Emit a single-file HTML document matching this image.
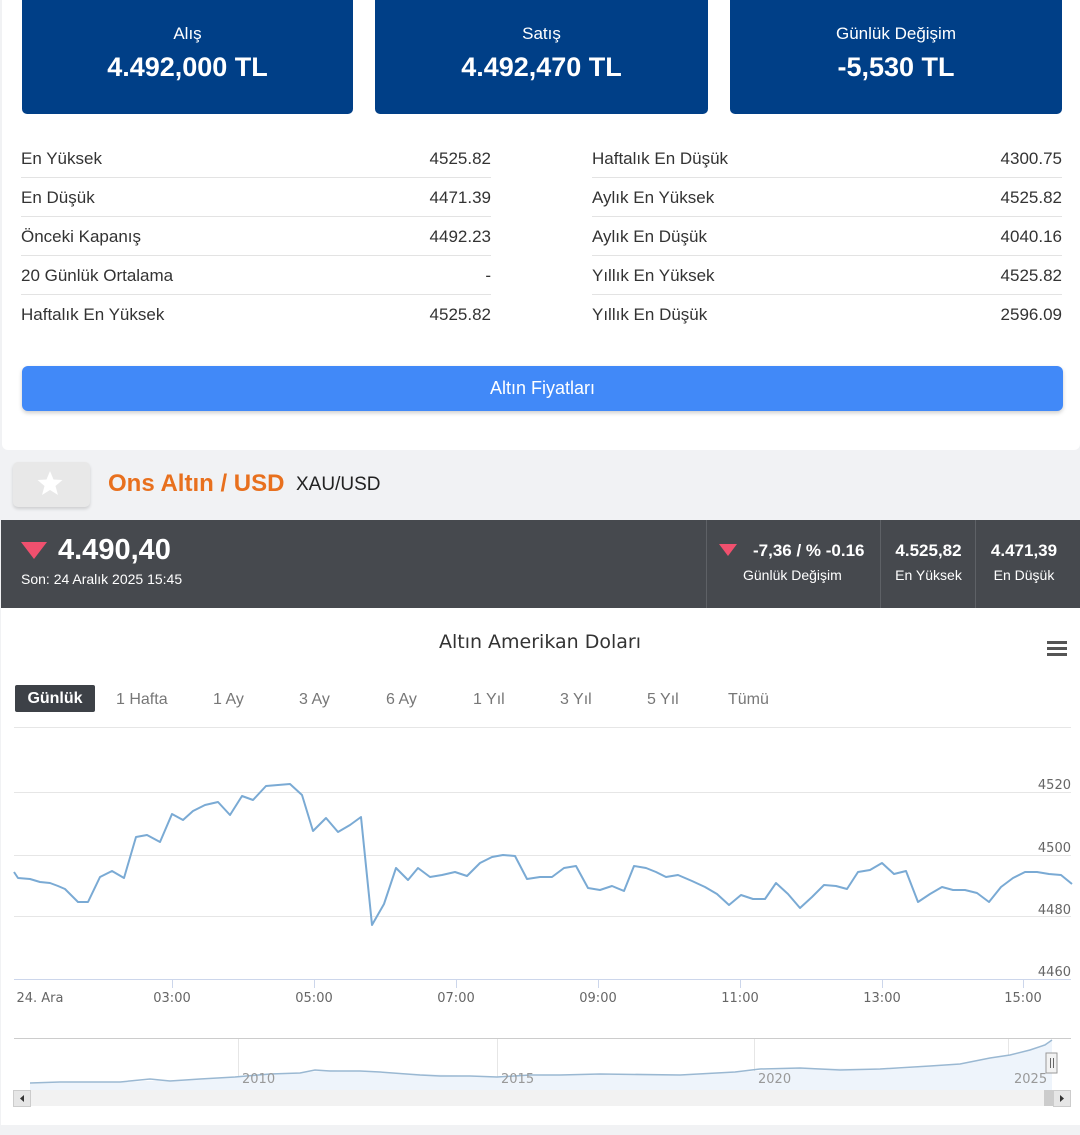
<!DOCTYPE html>
<html><head><meta charset="utf-8">
<style>
*{margin:0;padding:0;box-sizing:border-box}
body{width:1080px;height:1135px;background:#f1f2f4;font-family:"Liberation Sans",sans-serif;position:relative;overflow:hidden;color:#333}
.abs{position:absolute}
.panel{left:2px;top:0;width:1078px;height:450px;background:#fff;border-radius:0 0 6px 6px}
.card{top:0;height:114px;background:#003f87;border-radius:0 0 5px 5px;color:#fff;text-align:center}
.card .l{position:absolute;top:24px;width:100%;font-size:17px}
.card .v{position:absolute;top:52px;width:100%;font-size:27px;font-weight:bold}
.row{height:39px;border-bottom:1px solid #e3e3e3;font-size:17px;line-height:39px;display:flex;justify-content:space-between;color:#333}
.btn{left:22px;top:366px;width:1041px;height:45px;background:#4189f8;border-radius:6px;color:#fff;text-align:center;line-height:45px;font-size:18px;box-shadow:0 2px 4px rgba(0,0,0,.2)}
.dark{left:1px;top:520px;width:1079px;height:88px;background:#46494e;color:#fff}
.tri{width:0;height:0;border-left:13px solid transparent;border-right:13px solid transparent;border-top:17px solid #f0506e}
.sep{top:0;width:1px;height:88px;background:#5e6166}
.chart{left:1px;top:608px;width:1079px;height:517px;background:#fff}
.rb{top:686px;font-size:16px;color:#777;line-height:27px}
</style></head><body>
<div class="abs panel"></div>
<div class="abs card" style="left:22px;width:331px"><div class="l">Alış</div><div class="v">4.492,000 TL</div></div>
<div class="abs card" style="left:375px;width:333px"><div class="l">Satış</div><div class="v">4.492,470 TL</div></div>
<div class="abs card" style="left:730px;width:332px"><div class="l">Günlük Değişim</div><div class="v">-5,530 TL</div></div>

<div class="abs" style="left:21px;top:139px;width:470px">
<div class="row"><span>En Yüksek</span><span>4525.82</span></div>
<div class="row"><span>En Düşük</span><span>4471.39</span></div>
<div class="row"><span>Önceki Kapanış</span><span>4492.23</span></div>
<div class="row"><span>20 Günlük Ortalama</span><span>-</span></div>
<div class="row" style="border:none"><span>Haftalık En Yüksek</span><span>4525.82</span></div>
</div>
<div class="abs" style="left:592px;top:139px;width:470px">
<div class="row"><span>Haftalık En Düşük</span><span>4300.75</span></div>
<div class="row"><span>Aylık En Yüksek</span><span>4525.82</span></div>
<div class="row"><span>Aylık En Düşük</span><span>4040.16</span></div>
<div class="row"><span>Yıllık En Yüksek</span><span>4525.82</span></div>
<div class="row" style="border:none"><span>Yıllık En Düşük</span><span>2596.09</span></div>
</div>
<div class="abs btn">Altın Fiyatları</div>

<div class="abs" style="left:13px;top:462px;width:77px;height:45px;background:#e8e8e8;border-radius:5px;box-shadow:0 2px 3px rgba(0,0,0,.15)">
<svg width="77" height="45" viewBox="0 0 77 45"><polygon fill="#fff" points="37,9 40.5,17.5 49.5,18 42.5,24 45,33 37,28 29,33 31.5,24 24.5,18 33.5,17.5"/></svg></div>
<div class="abs" style="left:108px;top:470px;font-size:24px;font-weight:bold;color:#e8701e">Ons Altın / USD</div>
<div class="abs" style="left:296px;top:474px;font-size:19px;color:#222">XAU/USD</div>

<div class="abs dark">
<div class="abs tri" style="left:20px;top:22px"></div>
<div class="abs" style="left:57px;top:14px;font-size:29px;font-weight:bold">4.490,40</div>
<div class="abs" style="left:20px;top:51px;font-size:14px">Son: 24 Aralık 2025 15:45</div>
<div class="abs sep" style="left:705px"></div>
<div class="abs sep" style="left:879px"></div>
<div class="abs sep" style="left:974px"></div>
<div class="abs tri" style="left:718px;top:24px;border-left-width:9px;border-right-width:9px;border-top-width:12px"></div>
<div class="abs" style="left:752px;top:21px;font-size:17px;font-weight:bold">-7,36 / % -0.16</div>
<div class="abs" style="left:742px;top:47px;font-size:14px">Günlük Değişim</div>
<div class="abs" style="left:880px;width:95px;text-align:center;top:21px;font-size:17px;font-weight:bold">4.525,82</div>
<div class="abs" style="left:880px;width:95px;text-align:center;top:47px;font-size:14px">En Yüksek</div>
<div class="abs" style="left:975px;width:96px;text-align:center;top:21px;font-size:17px;font-weight:bold">4.471,39</div>
<div class="abs" style="left:975px;width:96px;text-align:center;top:47px;font-size:14px">En Düşük</div>
</div>

<div class="abs chart"></div>
<div class="abs" style="left:0;width:1080px;top:631px;text-align:center;color:#333;font-family:'DejaVu Sans',sans-serif;font-size:19px">Altın Amerikan Doları</div>
<div class="abs" style="left:1047px;top:641px;width:20px;height:3px;background:#555;box-shadow:0 6px 0 #555,0 12px 0 #555"></div>
<div class="abs rb" style="left:15px;width:80px;height:27px;background:#3d4147;color:#fff;font-weight:bold;text-align:center;border-radius:2px;top:685px">Günlük</div>
<div class="abs rb" style="left:116px">1 Hafta</div>
<div class="abs rb" style="left:213px">1 Ay</div>
<div class="abs rb" style="left:299px">3 Ay</div>
<div class="abs rb" style="left:386px">6 Ay</div>
<div class="abs rb" style="left:473px">1 Yıl</div>
<div class="abs rb" style="left:560px">3 Yıl</div>
<div class="abs rb" style="left:647px">5 Yıl</div>
<div class="abs rb" style="left:728px">Tümü</div>

<svg class="abs" style="left:0;top:0" width="1080" height="1135" font-family="DejaVu Sans, sans-serif">
<g stroke="#e6e6e6" stroke-width="1">
<line x1="14" y1="727.5" x2="1071" y2="727.5"/>
<line x1="14" y1="792.5" x2="1071" y2="792.5"/>
<line x1="14" y1="855.5" x2="1071" y2="855.5"/>
<line x1="14" y1="916.5" x2="1071" y2="916.5"/>
</g>
<line x1="14" y1="979.5" x2="1071" y2="979.5" stroke="#ccd6eb"/>
<g stroke="#ccd6eb"><line x1="172.5" y1="979" x2="172.5" y2="988"/><line x1="314.5" y1="979" x2="314.5" y2="988"/><line x1="456.5" y1="979" x2="456.5" y2="988"/><line x1="598.5" y1="979" x2="598.5" y2="988"/><line x1="740.5" y1="979" x2="740.5" y2="988"/><line x1="882.5" y1="979" x2="882.5" y2="988"/><line x1="1023.5" y1="979" x2="1023.5" y2="988"/></g>
<g font-size="13" fill="#666" text-anchor="end">
<text x="1071" y="789">4520</text><text x="1071" y="852">4500</text><text x="1071" y="914">4480</text><text x="1071" y="976">4460</text>
</g>
<g font-size="13" fill="#666" text-anchor="middle">
<text x="40" y="1002">24. Ara</text><text x="172" y="1002">03:00</text><text x="314" y="1002">05:00</text><text x="456" y="1002">07:00</text><text x="598" y="1002">09:00</text><text x="740" y="1002">11:00</text><text x="882" y="1002">13:00</text><text x="1023" y="1002">15:00</text>
</g>
<polyline fill="none" stroke="#7aaad4" stroke-width="2" stroke-linejoin="round" points="14,872 18,878 30,879 40,882 50,883 58,886 65,889 78,902 88,902 100,877 112,871 124,878 136,837 147,835 160,842 172,814 183,820 193,811 205,805 218,802 230,815 242,796 253,800 266,786 278,785 290,784 302,795 313,831 326,818 338,832 350,825 361,817 372,925 384,904 396,868 408,880 418,868 430,877 442,875 455,872 467,876 480,863 492,857 503,855 515,856 527,879 540,877 552,877 564,868 576,866 588,888 600,890 612,886 624,891 634,866 646,868 656,872 666,877 678,875 692,881 705,887 717,894 729,905 741,895 753,899 765,899 776,883 788,894 800,908 812,897 824,885 836,886 847,889 858,872 870,870 882,863 894,874 906,871 918,902 930,894 942,887 953,890 965,890 977,893 989,902 1001,887 1013,878 1025,872 1037,872 1049,874 1061,875 1072,884"/>
<line x1="14" y1="1038.5" x2="1071" y2="1038.5" stroke="#ccc"/>
<g stroke="#e6e6e6"><line x1="238.5" y1="1039" x2="238.5" y2="1090"/><line x1="497.5" y1="1039" x2="497.5" y2="1090"/><line x1="754.5" y1="1039" x2="754.5" y2="1090"/><line x1="1008.5" y1="1039" x2="1008.5" y2="1090"/></g>
<polygon fill="#eef4fb" points="30,1083 120,1082 200,1079 300,1073 330,1070 400,1073 500,1077 560,1075 680,1075 740,1072 800,1068 900,1069 960,1064 1010,1055 1040,1046 1052,1040 1052,1090 30,1090"/>
<polyline fill="none" stroke="#9ab8d2" stroke-width="1.5" points="30,1083 60,1082 120,1082 150,1079 170,1081 200,1079 235,1077 270,1074 300,1073 315,1070 330,1071 360,1071 380,1072 420,1075 440,1076 470,1076 497,1077 530,1075 560,1075 600,1074 680,1075 735,1072 760,1069 800,1068 840,1070 880,1069 930,1066 960,1064 990,1058 1010,1055 1030,1050 1045,1045 1052,1040"/>
<g font-size="13" fill="#999"><text x="242" y="1083">2010</text><text x="501" y="1083">2015</text><text x="758" y="1083">2020</text><text x="1014" y="1083">2025</text></g>
<rect x="1046" y="1053" width="11" height="20" fill="#f2f2f2" stroke="#999"/>
<line x1="1050.5" y1="1058" x2="1050.5" y2="1068" stroke="#666"/><line x1="1053.5" y1="1058" x2="1053.5" y2="1068" stroke="#666"/>
<rect x="14" y="1090" width="1057" height="16" fill="#f2f2f2"/>
<rect x="13.5" y="1090.5" width="17" height="16" fill="#e6e6e6" stroke="#ccc"/>
<rect x="1053.5" y="1090.5" width="17" height="16" fill="#e6e6e6" stroke="#ccc"/>
<rect x="1044" y="1090" width="10" height="16" fill="#ccc"/>
<polygon points="24,1095 24,1102 20,1098.5" fill="#333"/>
<polygon points="1060,1095 1060,1102 1064,1098.5" fill="#333"/>
</svg>
</body></html>
